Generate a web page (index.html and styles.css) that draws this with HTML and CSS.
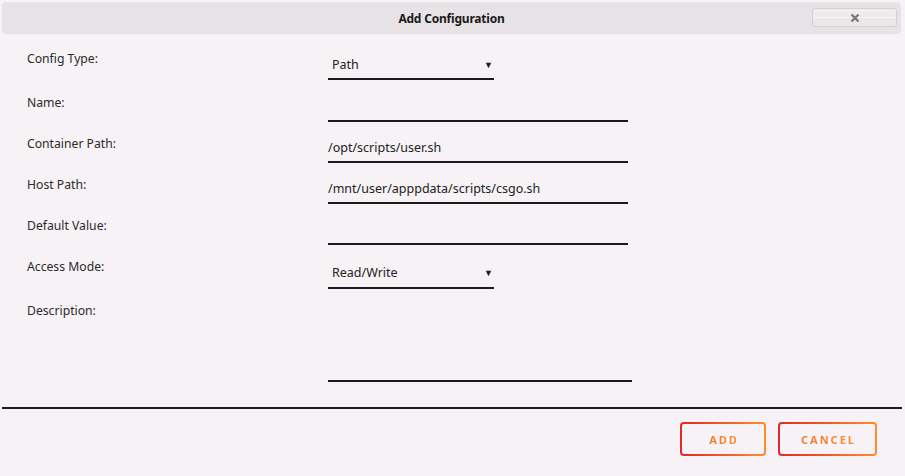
FILE: index.html
```html
<!DOCTYPE html>
<html>
<head>
<meta charset="utf-8">
<link rel="stylesheet" href="styles.css">
</head>
<body>
<div class="dialog">
  <div class="titlebar">
    <span class="title">Add Configuration</span>
    <button class="close" type="button">
      <svg width="10" height="10" viewBox="0 0 10 10"><path d="M1.5 1.5 L8.5 8.5 M8.5 1.5 L1.5 8.5" stroke="#7a7a7a" stroke-width="2.4" stroke-linecap="butt"/></svg>
    </button>
  </div>
  <form class="form">
    <div class="row row-select">
      <label class="label">Config Type:</label>
      <div class="select"><span>Path</span><span class="caret">▼</span></div>
    </div>
    <div class="row">
      <label class="label">Name:</label>
      <div class="input"></div>
    </div>
    <div class="row">
      <label class="label">Container Path:</label>
      <div class="input">/opt/scripts/user.sh</div>
    </div>
    <div class="row">
      <label class="label">Host Path:</label>
      <div class="input">/mnt/user/apppdata/scripts/csgo.sh</div>
    </div>
    <div class="row">
      <label class="label">Default Value:</label>
      <div class="input"></div>
    </div>
    <div class="row row-select row-access">
      <label class="label">Access Mode:</label>
      <div class="select"><span>Read/Write</span><span class="caret">▼</span></div>
    </div>
    <div class="row">
      <label class="label">Description:</label>
      <div class="textarea"></div>
    </div>
  </form>
  <div class="buttonpane">
    <button class="btn" type="button"><span class="btn-text">ADD</span></button>
    <button class="btn btn-cancel" type="button"><span class="btn-text">CANCEL</span></button>
  </div>
</div>
</body>
</html>
```

FILE: styles.css
```css
html, body {
  margin: 0;
  padding: 0;
  background: #f6f2f5;
  font-family: "Noto Sans", "Open Sans", sans-serif;
  color: #1c1b1b;
}
.dialog {
  width: 905px;
  height: 476px;
  display: flex;
  flex-direction: column;
}
.titlebar {
  margin: 2px 4px 0 2px;
  height: 32px;
  background: #e7e2e5;
  border-radius: 4px;
  display: flex;
  align-items: center;
  justify-content: center;
  position: relative;
}
.title {
  font-size: 12px;
  font-weight: 700;
  color: #1c1b1b;
  letter-spacing: -0.2px;
}
.close {
  position: absolute;
  right: 4px;
  top: 6px;
  width: 85px;
  height: 19px;
  border: 1px solid #d3d0d2;
  border-radius: 3px;
  background: linear-gradient(#f0eef0 0%, #ebe9ea 48%, #f7f5f6 50%, #e9e7e8 56%, #eae8e9 100%);
  padding: 0;
  display: flex;
  align-items: center;
  justify-content: center;
}
.form {
  padding: 16px 0 0 27px;
  display: flex;
  flex-direction: column;
}
.row {
  display: grid;
  grid-template-columns: 301px auto;
  align-items: start;
  margin-bottom: 13px;
}
.label {
  font-size: 12.2px;
  line-height: 16px;
  padding-top: 1px;
  color: #2b2b2b;
}
.input {
  width: 300px;
  height: 26px;
  border-bottom: 2px solid #1c1b1b;
  font-size: 12.5px;
  line-height: 26px;
  color: #222;
  box-sizing: content-box;
}
.row-select {
  margin-bottom: 14px;
}
.row-access .select {
  height: 29px;
}
.row-access {
  margin-bottom: 13px;
}
.select {
  width: 161px;
  height: 28px;
  padding: 0 1px 0 4px;
  border-bottom: 2px solid #1c1b1b;
  display: flex;
  justify-content: space-between;
  align-items: center;
  font-size: 12.5px;
  color: #222;
}
.caret {
  font-size: 9px;
  color: #1c1b1b;
}
.textarea {
  width: 304px;
  height: 78px;
  border-bottom: 2px solid #1c1b1b;
}
.buttonpane {
  margin: 12px 3px 0 2px;
  border-top: 2px solid #1c1b1b;
  padding: 13px 25px 0 0;
  display: flex;
  justify-content: flex-end;
  gap: 12px;
}
.btn {
  width: 86px;
  height: 34px;
  border: 2px solid transparent;
  border-radius: 4px;
  background: linear-gradient(#f6f2f5, #f6f2f5) padding-box, linear-gradient(90deg, #e22828, #ff8c2f) border-box;
  padding: 0;
  display: flex;
  align-items: center;
  justify-content: center;
  font-family: "Noto Sans", "Open Sans", sans-serif;
}
.btn-cancel {
  width: 99px;
}
.btn-text {
  font-size: 11px;
  font-weight: 700;
  letter-spacing: 2px;
  padding-left: 2px;
  color: #f28a34;
  background: linear-gradient(90deg, #f0762f, #ff8c2f);
  -webkit-background-clip: text;
  background-clip: text;
  -webkit-text-fill-color: transparent;
}
```
